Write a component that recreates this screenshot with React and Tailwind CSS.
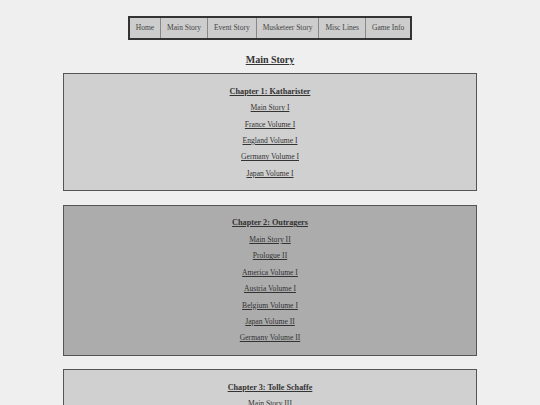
import React from 'react';

const nav = ['Home', 'Main Story', 'Event Story', 'Musketeer Story', 'Misc Lines', 'Game Info'];

const chapters = [
  {
    title: 'Chapter 1: Katharister',
    bg: 'bg-[#d0d0d0]',
    links: ['Main Story I', 'France Volume I', 'England Volume I', 'Germany Volume I', 'Japan Volume I'],
  },
  {
    title: 'Chapter 2: Outragers',
    bg: 'bg-[#acacac]',
    links: [
      'Main Story II',
      'Prologue II',
      'America Volume I',
      'Austria Volume I',
      'Belgium Volume I',
      'Japan Volume II',
      'Germany Volume II',
    ],
  },
  {
    title: 'Chapter 3: Tolle Schaffe',
    bg: 'bg-[#d0d0d0]',
    links: ['Main Story III', 'Prologue III', 'Italy Volume I'],
  },
];

function Chapter({ chapter }) {
  return (
    <section className={`${chapter.bg} border-[1.5px] border-[#555] pt-[9.5px] pb-[8px] text-center`}>
      <h3 className="text-[8.2px] leading-[16.7px] font-bold underline text-[#333]">{chapter.title}</h3>
      {chapter.links.map((l) => (
        <div key={l} className="text-[7.6px] leading-[16.4px]">
          <a href="#" className="underline text-[#333]">{l}</a>
        </div>
      ))}
    </section>
  );
}

export default function App() {
  return (
    <div className="min-h-screen bg-[#efefef] font-['Liberation_Serif',serif] text-[#333] pt-[16px] pb-8">
      <nav className="flex justify-center">
        <div className="flex border-2 border-[#333] bg-[#cdcdcd]">
          {nav.map((n, i) => (
            <a
              key={n}
              href="#"
              className={`h-[20px] px-[6px] flex items-center text-[7.5px] text-[#444] ${i < nav.length - 1 ? 'border-r border-[#888]' : ''}`}
            >
              {n}
            </a>
          ))}
        </div>
      </nav>
      <h2 className="mt-[12px] text-center text-[10px] leading-[16px] font-bold underline text-[#333]">Main Story</h2>
      <main className="mx-[63px] mt-[5px] flex flex-col gap-[13.5px]">
        {chapters.map((c) => (
          <Chapter key={c.title} chapter={c} />
        ))}
      </main>
    </div>
  );
}
